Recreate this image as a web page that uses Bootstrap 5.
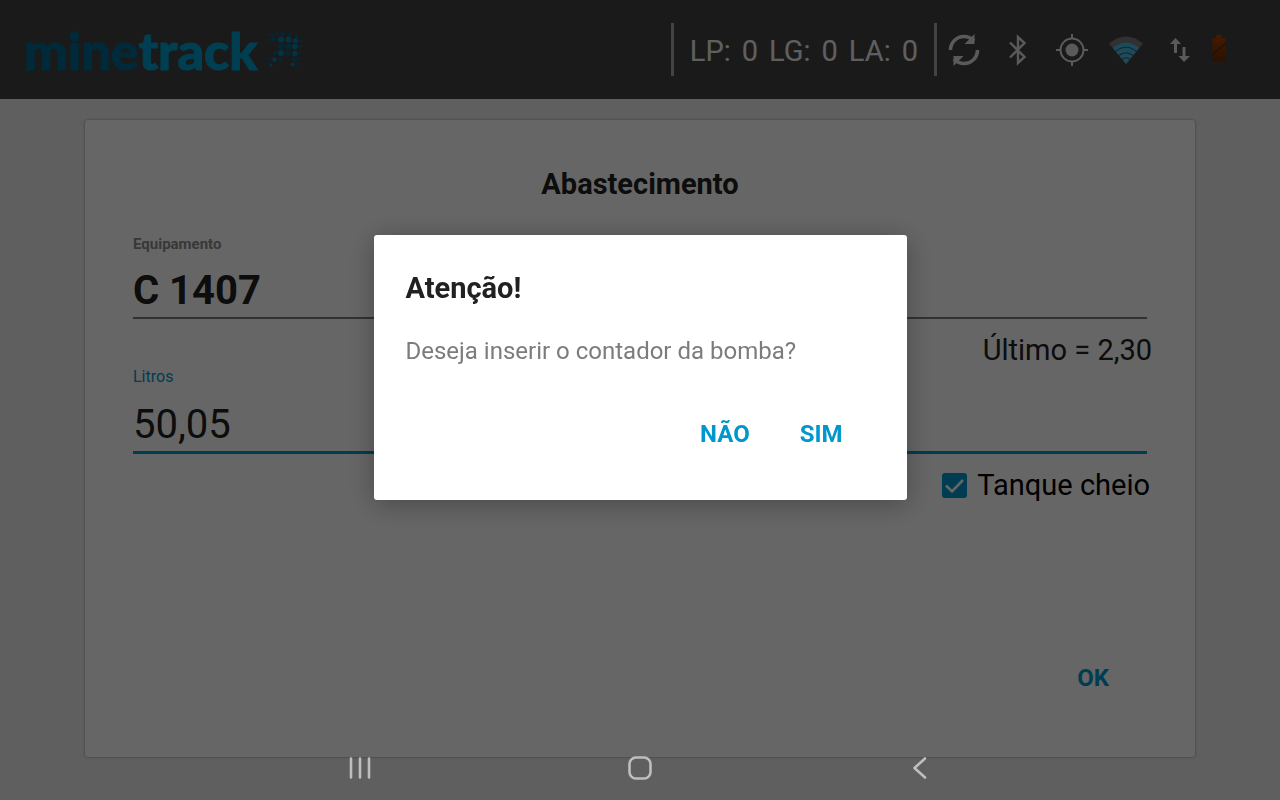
<!DOCTYPE html>
<html lang="pt-BR">
<head>
<meta charset="utf-8">
<meta name="viewport" content="width=device-width, initial-scale=1">
<title>minetrack - Abastecimento</title>
<link href="https://cdn.jsdelivr.net/npm/bootstrap@5.3.0/dist/css/bootstrap.min.css" rel="stylesheet">
<style>
  :root { --brand: #0098cc; --ink: #212121; }
  body { font-family: Roboto, "Liberation Sans", sans-serif; background: #eee; color: var(--ink); }
  .topbar { background: #424242; min-height: 99px; padding: 0 49px 0 24px; }
  .brand { font: 900 52px/56px Lato, sans-serif; color: #006990; text-decoration: none; -webkit-text-stroke: 1px currentColor; }
  .brand span { color: #009dcb; }
  .brand .strong { fill: #0083ad; }
  .counters { border: solid #a8a8a8; border-width: 0 3px; height: 53px; padding: 0 16px; gap: 11px; font-size: 29px; line-height: 56px; color: #eee; white-space: nowrap; }
  .status { width: 54px; color: #e0e0e0; }
  .status svg { display: block; margin: 0 auto; }
  .status-end { width: 24px; padding-bottom: 4px; }
  .sheet { margin: 21px 85px 43px; padding: 44px 43px 55px 48px; border-radius: 3px; background: #fff; box-shadow: 0 0 3px rgba(0,0,0,.4); }
  .sheet h1 { font-size: 29px; line-height: 40px; font-weight: 700; margin: 0 5px 29px 0; }
  .entry { margin-right: 5px; }
  .entry label { display: block; font-size: 16px; line-height: 22px; color: var(--brand); }
  .entry input { display: block; width: 100%; height: 66px; padding: 9px 0 0; border: 0; border-bottom: 3px solid var(--brand); background: transparent; color: var(--ink); font-size: 40px; outline: 0; }
  .entry.fixed label { color: #8c8c8c; font-size: 15px; font-weight: 700; }
  .entry.fixed input { height: 64px; border-bottom: 2px solid #7c7c7c; font-weight: 700; }
  .note { margin-top: 15px; font-size: 29px; line-height: 32px; }
  .full-tank { color: #000; gap: 10px; padding-right: 2px; }
  .full-tank input { appearance: none; width: 25px; height: 25px; margin: 0; border-radius: 3px; background: var(--brand) url("data:image/svg+xml,%3Csvg xmlns='http://www.w3.org/2000/svg' viewBox='0 0 25 25'%3E%3Cpath d='M4 12.500l6 6L21 7' fill='none' stroke='white' stroke-width='2.600'/%3E%3C/svg%3E") center / contain; }
  .flat { font-size: 24px; line-height: 48px; font-weight: 700; color: var(--brand); padding: 0 16px; border: 0; }
  .flat:hover { color: #007ba6; }
  .sheet .flat { margin-right: 27px; }
  .modal { padding-bottom: 65px; }
  .modal-backdrop { --bs-backdrop-opacity: .6; }
  .modal-dialog { --bs-modal-width: 533px; min-height: 100%; margin-top: 0; margin-bottom: 0; }
  .modal-content { padding: 33px 48px 42px 32px; border: 0; border-radius: 3px; box-shadow: 0 4px 28px rgba(0,0,0,.3); }
  .modal-content h2 { font-size: 29px; line-height: 40px; font-weight: 700; margin-bottom: 27px; }
  .modal-content p { font-size: 24px; line-height: 32px; color: #7c7c7c; margin-bottom: 43px; }
  .choices { gap: 18px; }
  .system-keys { z-index: 1060; height: 64px; pointer-events: none; }
  .system-keys button { width: 280px; max-width: 33%; color: #bebebe; border: 0; pointer-events: auto; padding: 0; }
  .system-keys svg { display: block; margin: 0 auto; }
</style>
</head>
<body class="d-flex flex-column min-vh-100">

<header class="topbar d-flex align-items-center">
  <a class="brand d-flex align-items-center gap-2 me-auto" href="#" aria-label="minetrack">
    <div>mine<span>track</span></div>
    <svg width="37" height="36" viewBox="0 0 37 36" fill="#00658a" aria-hidden="true">
      <circle cx="6" cy="3" r="1.400"/><circle cx="11" cy="2.500" r="1.700"/><circle cx="17" cy="2" r="1.900"/><circle cx="24" cy="2.500" r="1.900"/><circle cx="31" cy="4" r="1.600"/>
      <circle cx="3" cy="8" r="1.600"/><circle cx="8" cy="7.500" r="2.200"/><circle class="strong" cx="15" cy="7.500" r="3"/><circle class="strong" cx="22.500" cy="7.500" r="3"/><circle class="strong" cx="29.500" cy="8.500" r="2.500"/><circle cx="35" cy="9" r="1.400"/>
      <circle cx="15" cy="14.500" r="2.700"/><circle cx="22.500" cy="14.500" r="3"/><circle class="strong" cx="29" cy="14.500" r="2.800"/><circle cx="34.500" cy="14.500" r="1.600"/>
      <circle cx="9" cy="21" r="2"/><circle class="strong" cx="15" cy="21" r="3"/><circle cx="22" cy="21.500" r="2.600"/><circle class="strong" cx="29" cy="21.500" r="2.700"/><circle cx="34.500" cy="21" r="1.500"/>
      <circle cx="4" cy="27" r="1.400"/><circle class="strong" cx="8.500" cy="27.500" r="2.200"/><circle cx="14" cy="27.500" r="1.900"/><circle cx="28" cy="27.500" r="2.300"/><circle cx="33" cy="27" r="1.500"/>
      <circle cx="1.500" cy="31" r="1.200"/><circle class="strong" cx="5" cy="33" r="1.500"/><circle class="strong" cx="26.500" cy="32.500" r="1.800"/><circle cx="31" cy="32" r="1.400"/>
    </svg>
  </a>
  <div class="counters d-flex"><span>LP:</span><span>0</span><span>LG:</span><span>0</span><span>LA:</span><span>0</span></div>
  <div class="status"><svg width="32" height="34" viewBox="0 0 32 34" fill="none" stroke="currentColor" stroke-width="3.600" role="img" aria-label="Sincronizar"><path d="M2.500 17C2.500 9 9 3.500 16 3.500c4 0 7.500 1.800 10 4.500M29.500 17c0 8-6.500 13.500-13.500 13.500-4 0-7.500-1.800-10-4.500"/><path d="M26.500 1v10h-10zM5.500 33V23h10z" fill="currentColor" stroke="none"/></svg></div>
  <div class="status"><svg width="20" height="32" viewBox="0 0 20 32" fill="none" stroke="currentColor" stroke-width="2.400" role="img" aria-label="Bluetooth"><path d="M2 8.500l14.500 14.500L10 29V3l6.500 6L2 23.500"/></svg></div>
  <div class="status"><svg width="32" height="32" viewBox="0 0 32 32" fill="none" stroke="currentColor" stroke-width="2" role="img" aria-label="GPS"><circle cx="16" cy="16" r="11.500"/><circle cx="16" cy="16" r="6.500" fill="currentColor" stroke="none"/><path d="M16 0v5M16 27v5M0 16h5M27 16h5"/></svg></div>
  <div class="status"><svg width="34" height="28" viewBox="0 0 34 28" role="img" aria-label="Wi-Fi"><path d="M17 28L0 7.500Q17-6.500 34 7.500z" fill="#7a7a7a"/><path d="M17 28L4 12Q17 1 30 12z" fill="#48bce4"/><g fill="none" stroke="#3c5865" stroke-width="1.200"><path d="M6.500 15.500Q17 7 27.500 15.500M10 19.500Q17 14 24 19.500M13 23.500Q17 20 21 23.500"/></g></svg></div>
  <div class="status"><svg width="20" height="26" viewBox="0 0 20 26" fill="currentColor" role="img" aria-label="Dados"><path d="M5.500 1L11 7H7v9H4V7H0zM14 25l-5.500-6h4v-9h3v9H20z"/></svg></div>
  <div class="status status-end"><svg width="14" height="26" viewBox="0 0 14 26" role="img" aria-label="Bateria"><defs><linearGradient id="charge" x2="0" y2="1"><stop stop-color="#b04400"/><stop offset="1" stop-color="#6a2a00"/></linearGradient></defs><path d="M4 0h6v3h3.500v23H.5V3H4z" fill="url(#charge)"/><path d="M0 20L14 8" stroke="#4a3024" stroke-width="1.500"/></svg></div>
</header>

<main class="sheet flex-grow-1 d-flex flex-column">
  <form class="flex-grow-1 d-flex flex-column" onsubmit="return false">
    <h1 class="text-center">Abastecimento</h1>
    <div class="entry fixed">
      <label for="equipamento">Equipamento</label>
      <input id="equipamento" type="text" value="C 1407">
    </div>
    <div class="note text-end">Último = 2,30</div>
    <div class="entry">
      <label for="litros">Litros</label>
      <input id="litros" type="text" inputmode="decimal" value="50,05">
    </div>
    <div class="note full-tank d-flex align-items-center justify-content-end">
      <input id="tanque" type="checkbox" checked>
      <label for="tanque">Tanque cheio</label>
    </div>
    <div class="mt-auto text-end"><button class="btn flat" type="submit">OK</button></div>
  </form>
</main>

<div class="modal-backdrop show"></div>
<div class="modal d-block" role="dialog" aria-modal="true" aria-labelledby="aviso" tabindex="-1">
  <div class="modal-dialog modal-dialog-centered">
    <div class="modal-content">
      <h2 id="aviso">Atenção!</h2>
      <p>Deseja inserir o contador da bomba?</p>
      <div class="choices d-flex justify-content-end">
        <button class="btn flat" type="button">NÃO</button>
        <button class="btn flat" type="button">SIM</button>
      </div>
    </div>
  </div>
</div>

<nav class="system-keys fixed-bottom d-flex justify-content-center" aria-label="Sistema">
  <button class="btn" type="button" aria-label="Recentes"><svg width="22" height="22" viewBox="0 0 22 22" stroke="currentColor" stroke-width="2.600" stroke-linecap="round"><path d="M2 1.500v19M11 1.500v19M20 1.500v19"/></svg></button>
  <button class="btn" type="button" aria-label="Início"><svg width="24" height="24" viewBox="0 0 24 24" fill="none" stroke="currentColor" stroke-width="2.600"><rect x="1.500" y="1.500" width="21" height="21" rx="6.500"/></svg></button>
  <button class="btn" type="button" aria-label="Voltar"><svg width="22" height="22" viewBox="0 0 22 22" fill="none" stroke="currentColor" stroke-width="2.600" stroke-linecap="round" stroke-linejoin="round"><path d="M16 1.500L5.500 11 16 20.500"/></svg></button>
</nav>

<script src="https://cdn.jsdelivr.net/npm/bootstrap@5.3.0/dist/js/bootstrap.bundle.min.js"></script>
</body>
</html>
